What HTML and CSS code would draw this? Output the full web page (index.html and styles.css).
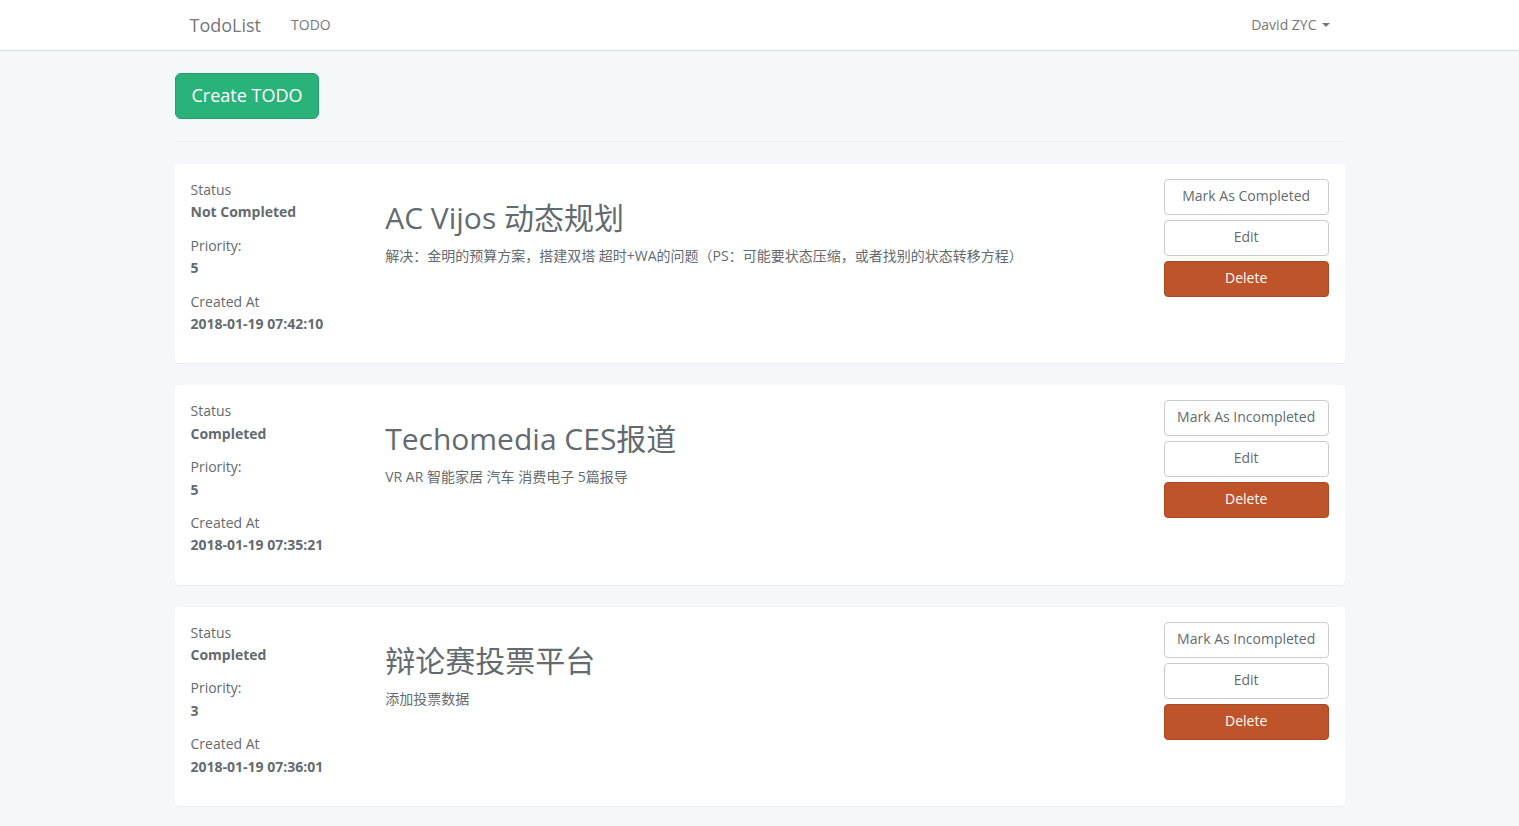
FILE: index.html
```html
<!DOCTYPE html>
<html lang="zh">
<head>
<meta charset="utf-8">
<title>TodoList</title>
<link rel="stylesheet" href="styles.css">
</head>
<body>
<nav class="navbar">
  <div class="container nav-inner">
    <div class="nav-left">
      <a class="brand" href="#">TodoList</a>
      <a class="nav-link" href="#">TODO</a>
    </div>
    <a class="nav-link user" href="#">David ZYC <span class="caret"></span></a>
  </div>
</nav>

<main class="container">
  <div class="toolbar">
    <a class="btn btn-lg btn-success" href="#">Create TODO</a>
  </div>
  <hr class="divider">

  <section class="panel">
    <div class="col-meta">
      <p>Status<br><strong>Not Completed</strong></p>
      <p>Priority:<br><strong>5</strong></p>
      <p>Created At<br><strong>2018-01-19 07:42:10</strong></p>
    </div>
    <div class="col-main">
      <h2>AC Vijos 动态规划</h2>
      <p>解决：金明的预算方案，搭建双塔 超时+WA的问题（PS：可能要状态压缩，或者找别的状态转移方程）</p>
    </div>
    <div class="col-actions">
      <a class="btn btn-default" href="#">Mark As Completed</a>
      <a class="btn btn-default" href="#">Edit</a>
      <a class="btn btn-danger" href="#">Delete</a>
    </div>
  </section>

  <section class="panel">
    <div class="col-meta">
      <p>Status<br><strong>Completed</strong></p>
      <p>Priority:<br><strong>5</strong></p>
      <p>Created At<br><strong>2018-01-19 07:35:21</strong></p>
    </div>
    <div class="col-main">
      <h2>Techomedia CES报道</h2>
      <p>VR AR 智能家居 汽车 消费电子 5篇报导</p>
    </div>
    <div class="col-actions">
      <a class="btn btn-default" href="#">Mark As Incompleted</a>
      <a class="btn btn-default" href="#">Edit</a>
      <a class="btn btn-danger" href="#">Delete</a>
    </div>
  </section>

  <section class="panel">
    <div class="col-meta">
      <p>Status<br><strong>Completed</strong></p>
      <p>Priority:<br><strong>3</strong></p>
      <p>Created At<br><strong>2018-01-19 07:36:01</strong></p>
    </div>
    <div class="col-main">
      <h2>辩论赛投票平台</h2>
      <p>添加投票数据</p>
    </div>
    <div class="col-actions">
      <a class="btn btn-default" href="#">Mark As Incompleted</a>
      <a class="btn btn-default" href="#">Edit</a>
      <a class="btn btn-danger" href="#">Delete</a>
    </div>
  </section>
</main>
</body>
</html>
```

FILE: styles.css
```css
* { box-sizing: border-box; }

html, body {
  margin: 0;
  padding: 0;
}

body {
  background: #f5f8fa;
  color: #636b6f;
  font-family: "Open Sans", "Noto Sans CJK SC", sans-serif;
  font-size: 14px;
  line-height: 1.6;
}

a { text-decoration: none; }

.container {
  width: 1170px;
  margin: 0 auto;
}

/* Navbar */
.navbar {
  background: #fff;
  border-bottom: 1px solid #d3e0e9;
  height: 51px;
  margin-bottom: 22px;
}

.nav-inner {
  display: flex;
  justify-content: space-between;
  align-items: center;
  height: 50px;
}

.nav-left {
  display: flex;
  align-items: center;
}

.brand {
  font-size: 18px;
  line-height: 20px;
  color: #777;
  padding: 15px;
}

.nav-link {
  color: #777;
  font-size: 14px;
  line-height: 20px;
  padding: 15px;
}

.user {
  display: flex;
  align-items: center;
}

.caret {
  display: inline-block;
  width: 0;
  height: 0;
  margin-left: 5px;
  border-top: 4px solid #777;
  border-left: 4px solid transparent;
  border-right: 4px solid transparent;
}

/* Toolbar */
.toolbar {
  display: flex;
}

.btn {
  display: inline-block;
  text-align: center;
  border: 1px solid transparent;
  border-radius: 4px;
  font-size: 14px;
  line-height: 22px;
  padding: 5px 12px 7px;
  white-space: nowrap;
}

.btn-lg {
  font-size: 18px;
  line-height: 24px;
  padding: 9px 16px 11px;
  border-radius: 6px;
}

.btn-success {
  background: #2ab27b;
  border-color: #259d6d;
  color: #fff;
}

.btn-default {
  background: #fff;
  border-color: #ccc;
  color: #636b6f;
}

.btn-danger {
  background: #bf5329;
  border-color: #aa4a24;
  color: #fff;
}

.divider {
  margin: 22px 0;
  border: 0;
  border-top: 1px solid #eceef0;
  height: 0;
}

/* Panels */
.panel {
  display: grid;
  grid-template-columns: 2fr 8fr 2fr;
  background: #fff;
  border: 1px solid transparent;
  border-radius: 4px;
  box-shadow: 0 1px 1px rgba(0, 0, 0, 0.05);
  margin-bottom: 22px;
  padding: 14px 0 16px;
}

.col-meta,
.col-main,
.col-actions {
  padding: 0 15px;
  min-width: 0;
}

.col-meta p,
.col-main p {
  margin: 0 0 11px;
}

.col-meta strong {
  font-weight: 700;
}

.col-main h2 {
  font-size: 30px;
  line-height: 33px;
  font-weight: 400;
  margin: 22px 0 11px;
  color: #636b6f;
}

.col-actions {
  display: flex;
  flex-direction: column;
  gap: 5px;
}

.col-actions .btn {
  display: block;
  width: 100%;
}
```
